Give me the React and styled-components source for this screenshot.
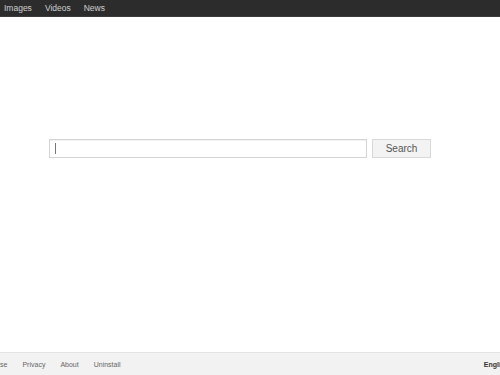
import React from 'react';
import styled, { createGlobalStyle } from 'styled-components';

const Global = createGlobalStyle`
  html, body {
    margin: 0;
    padding: 0;
    height: 100%;
    overflow: hidden;
    background: #fff;
    font-family: 'Liberation Sans', Arial, sans-serif;
  }
  #root {
    height: 100%;
  }
`;

const Page = styled.div`
  display: flex;
  flex-direction: column;
  height: 100%;
`;

const TopBar = styled.nav`
  display: flex;
  align-items: center;
  gap: 13px;
  height: 16px;
  padding-left: 4px;
  background: #2c2c2c;
  border-bottom: 1px solid #3a3a3a;
`;

const NavLink = styled.span`
  color: #d0d0d0;
  font-size: 8.5px;
  cursor: pointer;
`;

const Main = styled.main`
  flex: 1;
  padding: 122px 0 0 49px;
`;

const SearchForm = styled.form`
  display: flex;
  gap: 5px;
  margin: 0;
`;

const InputWrap = styled.div`
  position: relative;

  /* text cursor shown in the focused field */
  &::after {
    content: '';
    position: absolute;
    left: 6px;
    top: 4px;
    width: 1px;
    height: 11px;
    background: #777;
  }
`;

const SearchInput = styled.input`
  box-sizing: border-box;
  display: block;
  width: 318px;
  height: 19px;
  padding: 0 5px;
  border: 1px solid #d4d4d4;
  box-shadow: inset 0 1px 1px rgba(0, 0, 0, 0.06);
  font-size: 10px;
  font-family: inherit;
  color: #333;
  caret-color: transparent;
  outline: none;
`;

const SearchButton = styled.button`
  box-sizing: border-box;
  width: 59px;
  height: 19px;
  padding: 0;
  border: 1px solid #d8d8d8;
  background: #f3f3f3;
  color: #555;
  font-size: 10px;
  font-family: inherit;
  cursor: pointer;
`;

const Footer = styled.footer`
  display: flex;
  align-items: center;
  justify-content: space-between;
  height: 21px;
  padding-top: 1px;
  background: #f2f2f2;
  border-top: 1px solid #e4e4e4;
`;

const FooterLinks = styled.div`
  display: flex;
  gap: 15px;
  margin-left: -5px;
`;

const FooterLink = styled.span`
  color: #666;
  font-size: 7px;
  cursor: pointer;
`;

const Language = styled.span`
  color: #333;
  font-size: 7px;
  font-weight: bold;
  margin-right: -9px;
`;

export default function App() {
  return (
    <Page>
      <Global />
      <TopBar>
        <NavLink>Images</NavLink>
        <NavLink>Videos</NavLink>
        <NavLink>News</NavLink>
      </TopBar>
      <Main>
        <SearchForm onSubmit={(e) => e.preventDefault()}>
          <InputWrap>
            <SearchInput type="text" />
          </InputWrap>
          <SearchButton type="submit">Search</SearchButton>
        </SearchForm>
      </Main>
      <Footer>
        <FooterLinks>
          <FooterLink>Use</FooterLink>
          <FooterLink>Privacy</FooterLink>
          <FooterLink>About</FooterLink>
          <FooterLink>Uninstall</FooterLink>
        </FooterLinks>
        <Language>English</Language>
      </Footer>
    </Page>
  );
}
